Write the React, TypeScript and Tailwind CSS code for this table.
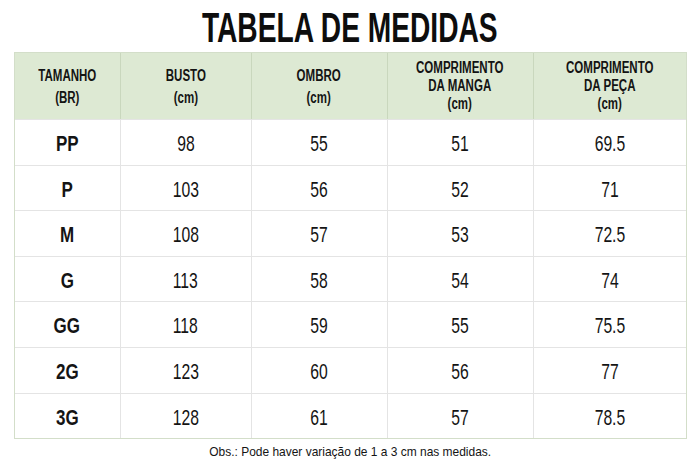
import React from 'react';

const rows = [
  ['PP', '98', '55', '51', '69.5'],
  ['P', '103', '56', '52', '71'],
  ['M', '108', '57', '53', '72.5'],
  ['G', '113', '58', '54', '74'],
  ['GG', '118', '59', '55', '75.5'],
  ['2G', '123', '60', '56', '77'],
  ['3G', '128', '61', '57', '78.5'],
];

const headers = [
  ['TAMANHO', '(BR)'],
  ['BUSTO', '(cm)'],
  ['OMBRO', '(cm)'],
  ['COMPRIMENTO', 'DA MANGA', '(cm)'],
  ['COMPRIMENTO', 'DA PEÇA', '(cm)'],
];

const cols = 'grid grid-cols-[105px_131px_136px_146px_1fr]';

export default function App() {
  return (
    <div className="w-[700px] h-[467px] bg-white text-[#141414] font-['Liberation_Sans',Arial,sans-serif] flex flex-col items-center">
      <h1 className="mt-[5.5px] h-[42.5px] text-[43px] leading-[42.5px] font-bold text-[#0d0d0d] scale-x-[0.655] whitespace-nowrap">
        TABELA DE MEDIDAS
      </h1>
      <div className="mt-[4px] w-[673px] border border-[#d3dec9]">
        <div className={`${cols} h-[66px] bg-[#dde9d3]`}>
          {headers.map((h, i) => (
            <div
              key={i}
              className={`flex items-center justify-center ${i > 0 ? 'border-l border-[#c9d7bd]' : ''}`}
            >
              <div
                className={`flex flex-col items-center text-[16px] font-bold scale-x-[0.72] whitespace-nowrap ${
                  h.length > 2 ? 'leading-[18px]' : 'leading-[22px] pt-[2px]'
                }`}
              >
                {h.map((line) => (
                  <span key={line}>{line}</span>
                ))}
              </div>
            </div>
          ))}
        </div>
        {rows.map((r) => (
          <div key={r[0]} className={`${cols} h-[45.6px] border-t border-[#e4e4e4]`}>
            {r.map((v, i) => (
              <div
                key={i}
                className={`flex items-center justify-center pt-[5px] ${i > 0 ? 'border-l border-[#e4e4e4]' : ''}`}
              >
                <span
                  className={`inline-block leading-none ${
                    i === 0 ? 'text-[21.5px] font-bold scale-x-[0.79]' : 'text-[21.5px] scale-x-[0.73]'
                  }`}
                >
                  {v}
                </span>
              </div>
            ))}
          </div>
        ))}
      </div>
      <p className="mt-[5px] text-[13px] leading-[16px] scale-x-[0.92] whitespace-nowrap">
        Obs.: Pode haver variação de 1 a 3 cm nas medidas.
      </p>
    </div>
  );
}
